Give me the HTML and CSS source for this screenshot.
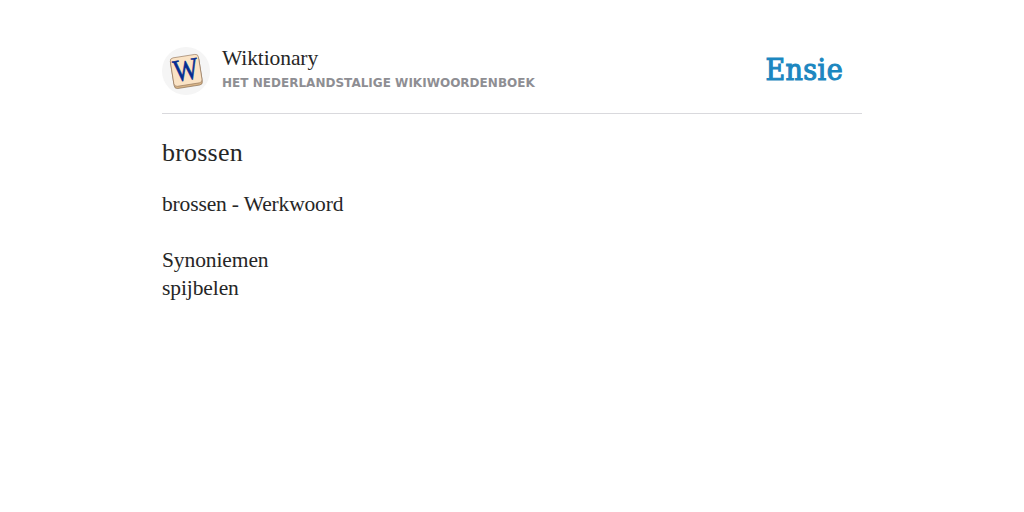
FILE: index.html
```html
<!DOCTYPE html>
<html lang="nl">
<head>
<meta charset="utf-8">
<title>brossen - Wiktionary</title>
<link rel="stylesheet" href="styles.css">
</head>
<body>
<main class="page">
  <header class="header">
    <div class="avatar">
      <svg width="48" height="48" viewBox="0 0 48 48" aria-hidden="true">
        <g transform="rotate(-9 24 24)">
          <rect x="10" y="11" width="28.5" height="29" rx="3.2" fill="#d9b587" stroke="#80644a" stroke-width=".6"/>
          <rect x="10" y="9" width="28.5" height="28.8" rx="3.2" fill="#fae3c5" stroke="#907258" stroke-width=".6"/>
          <text class="tile-letter" x="24" y="33" text-anchor="middle" textLength="25" lengthAdjust="spacingAndGlyphs">W</text>
        </g>
      </svg>
    </div>
    <div class="source">
      <div class="name">Wiktionary</div>
      <div class="tagline">HET NEDERLANDSTALIGE WIKIWOORDENBOEK</div>
    </div>
    <div class="brand">Ensie</div>
  </header>
  <h1 class="title">brossen</h1>
  <div class="definition">
    <p class="word">brossen - Werkwoord</p>
    <p class="synonyms">Synoniemen<br>spijbelen</p>
  </div>
</main>
</body>
</html>
```
FILE: styles.css
```css
* { box-sizing: border-box; margin: 0; padding: 0; }
body { background: #fff; color: #262626; font-family: "Liberation Serif", serif; }
.page { width: 700px; margin: 0 auto; padding-top: 40px; }
.header { display: flex; height: 74px; padding-top: 7px; border-bottom: 1px solid #d9d9dd; }
.avatar { width: 48px; height: 48px; border-radius: 50%; background: #f5f5f5; margin-right: 12px; }
.avatar svg { display: block; }
.tile-letter { font: 31px "Liberation Serif", serif; fill: #052d91; stroke: #052d91; stroke-width: .6px; }
.name { font-size: 21.5px; line-height: 23px; letter-spacing: -0.1px; }
.tagline { font: bold 12px/16px "DejaVu Sans", sans-serif; letter-spacing: .02px; color: #8e8e93; margin-top: 5px; white-space: nowrap; }
.brand { margin: 5px 19px 0 auto; font: 30px/36px "DejaVu Serif Condensed", "DejaVu Serif", serif; font-stretch: condensed; letter-spacing: .4px; color: #1c87c0; -webkit-text-stroke: 1.1px #1c87c0; }
.title { font-size: 26px; font-weight: 400; line-height: 32px; letter-spacing: .2px; margin-top: 23px; }
.definition { font-size: 21.5px; line-height: 28px; margin-top: 21px; }
.word { letter-spacing: -.15px; }
.synonyms { letter-spacing: -.1px; margin-top: 28px; }
```
